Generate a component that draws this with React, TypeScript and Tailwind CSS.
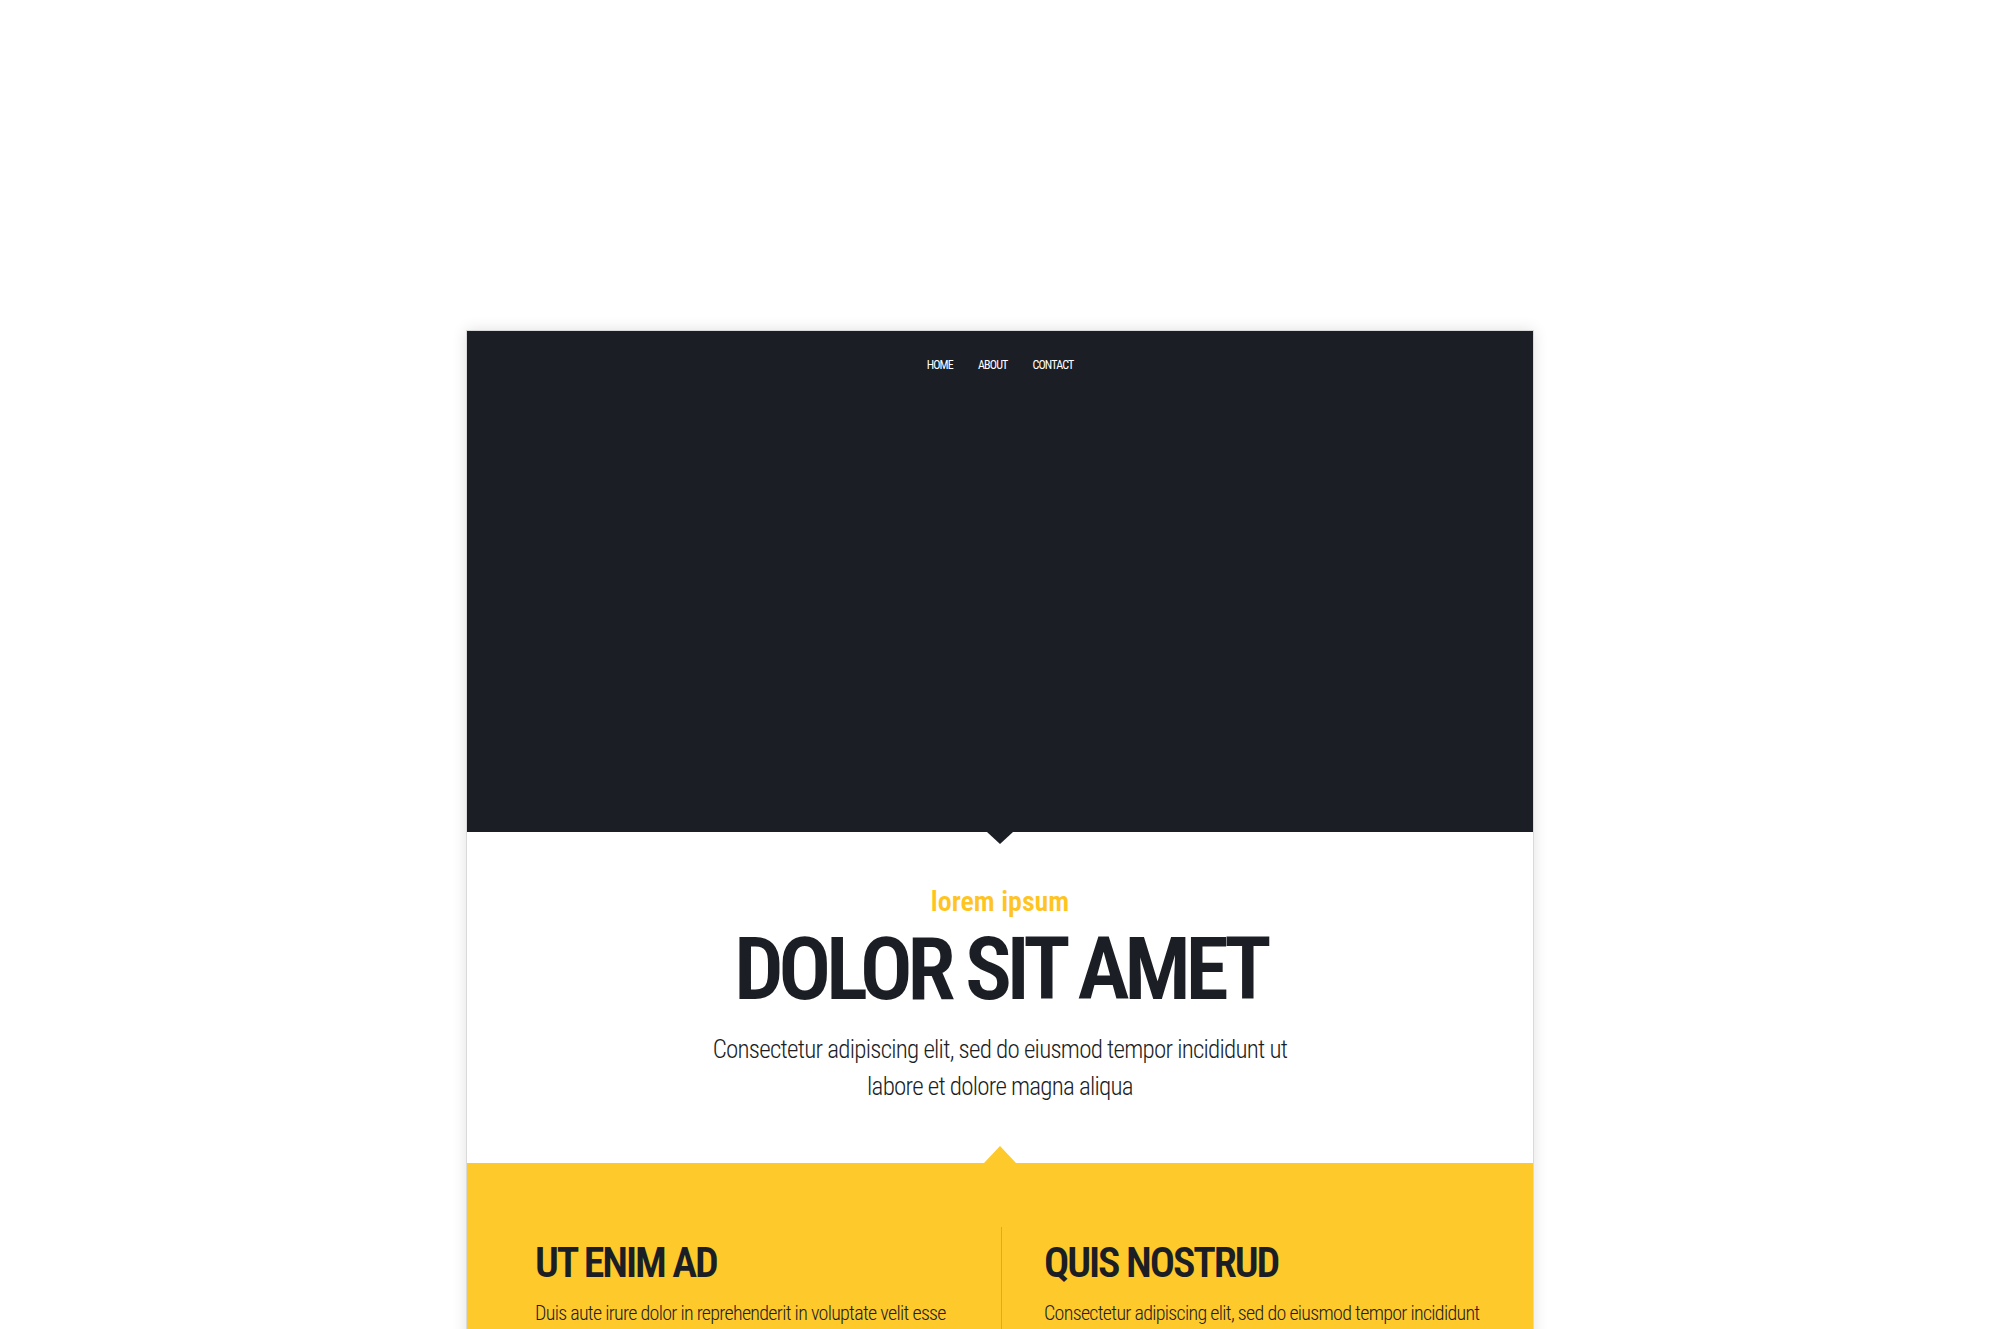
const navLinks = ["Home", "About", "Contact"];

const columns = [
  {
    title: "Ut enim ad",
    body: "Duis aute irure dolor in reprehenderit in voluptate velit esse cillum dolore eu fugiat nulla pariatur.",
  },
  {
    title: "Quis nostrud",
    body: "Consectetur adipiscing elit, sed do eiusmod tempor incididunt labore et dolore magna aliqua.",
  },
];

const App = () => {
  return (
    <div className="min-h-screen bg-white pt-[330px] font-['Roboto',sans-serif] [font-stretch:75%] text-[#1b1e25]">
      <div className="mx-auto w-[1068px] border-x border-t border-[#d9d9d9] bg-white shadow-[0_0_14px_rgba(0,0,0,0.12)]">
        {/* hero */}
        <header className="relative h-[501px] bg-[#1b1e25] pt-[24px]">
          <nav className="flex justify-center gap-[25px]">
            {navLinks.map((link) => (
              <a
                key={link}
                href="#"
                className="text-[12px] leading-5 font-normal tracking-[-0.07em] uppercase text-white"
              >
                {link}
              </a>
            ))}
          </nav>
          <span className="absolute left-1/2 top-full h-0 w-0 -translate-x-1/2 border-x-[13px] border-t-[12px] border-x-transparent border-t-[#1b1e25]" />
        </header>

        {/* intro */}
        <section className="flex flex-col items-center pt-[52px] pb-[58px] text-center">
          <p className="text-[28px] leading-[36px] font-semibold text-[#ffc41f]">
            lorem ipsum
          </p>
          <h1 className="mt-[5px] text-[88px] leading-[88px] font-semibold tracking-[-0.062em] uppercase text-[#1b1e25]">
            Dolor sit amet
          </h1>
          <p className="mt-[18px] text-[25px] leading-[37px] font-light tracking-[-0.03em] text-[#1b1e25]">
            Consectetur adipiscing elit, sed do eiusmod tempor incididunt ut
            <br />
            labore et dolore magna aliqua
          </p>
        </section>

        {/* features */}
        <section className="relative bg-[#fec92b] pl-[68px] pr-[30px] pt-[64px] pb-[80px]">
          <span className="absolute bottom-full left-1/2 h-0 w-0 -translate-x-1/2 border-x-[16px] border-b-[17px] border-x-transparent border-b-[#fec92b]" />
          <div className="grid grid-cols-[466px_1fr]">
            {columns.map((col, i) => (
              <div
                key={col.title}
                className={
                  i === 0
                    ? "pt-[10px] pr-[30px]"
                    : "border-l border-[#d9ab2c] pt-[10px] pl-[42px]"
                }
              >
                <h2 className="text-[42px] leading-[52px] font-semibold tracking-[-0.05em] uppercase text-[#1b1e25]">
                  {col.title}
                </h2>
                <p className="mt-[9px] text-[20px] leading-[30px] font-light tracking-[-0.035em] text-[#1b1e25]">
                  {col.body}
                </p>
              </div>
            ))}
          </div>
        </section>
      </div>
    </div>
  );
};

export default App;
